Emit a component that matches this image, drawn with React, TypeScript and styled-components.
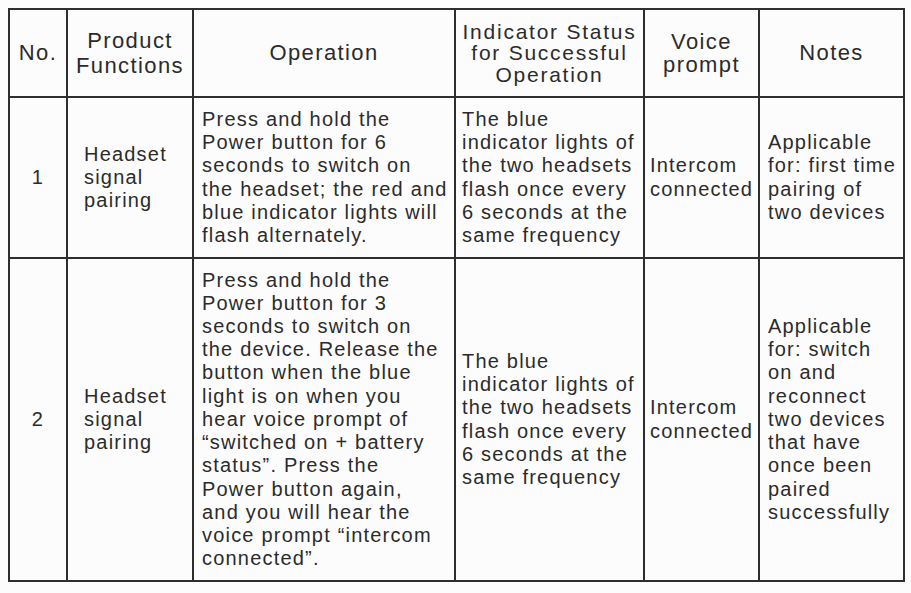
import React from "react";
import styled, { createGlobalStyle } from "styled-components";

const Global = createGlobalStyle`
  html, body { margin: 0; padding: 0; background: #fcfcfc; }
  body { font-family: "Liberation Sans", Arial, sans-serif; color: #2b2b2b; }
`;

const Page = styled.div`
  width: 911px;
  height: 593px;
  padding: 8px 0 0 8px;
  box-sizing: border-box;
`;

const Table = styled.table`
  border-collapse: collapse;
  table-layout: fixed;
  width: 895px;
  border: 2px solid #2e2e2e;
`;

const Row = styled.tr<{ $h: number }>`
  height: ${(p) => p.$h}px;
`;

const Cell = styled.td<{ $align?: string; $pl?: number; $lh?: number }>`
  border: 2px solid #2e2e2e;
  padding: 0 0 0 ${(p) => p.$pl ?? 8}px;
  vertical-align: middle;
  text-align: ${(p) => p.$align ?? "left"};
  font-size: 20px;
  line-height: ${(p) => p.$lh ?? 23.2}px;
  letter-spacing: 1.2px;
  white-space: nowrap;
  overflow: hidden;
`;

const Head = styled(Cell).attrs({ as: "th" })<{ $fs?: number; $ls?: number }>`
  font-weight: normal;
  text-align: center;
  padding: 0;
  font-size: ${(p) => p.$fs ?? 22}px;
  letter-spacing: ${(p) => p.$ls ?? 1.4}px;
`;

const Lines = ({ l }: { l: string[] }) => (
  <>
    {l.map((s, i) => (
      <React.Fragment key={i}>
        {i > 0 && <br />}
        {s}
      </React.Fragment>
    ))}
  </>
);

const rows = [
  {
    no: "1",
    h: 161,
    fn: ["Headset", "signal", "pairing"],
    op: [
      "Press and hold the",
      "Power button for 6",
      "seconds to switch on",
      "the headset; the red and",
      "blue indicator lights will",
      "flash alternately.",
    ],
    ind: [
      "The blue",
      "indicator lights of",
      "the two headsets",
      "flash once every",
      "6 seconds at the",
      "same frequency",
    ],
    voice: ["Intercom", "connected"],
    notes: ["Applicable", "for: first time", "pairing of", "two devices"],
  },
  {
    no: "2",
    h: 323,
    fn: ["Headset", "signal", "pairing"],
    op: [
      "Press and hold the",
      "Power button for 3",
      "seconds to switch on",
      "the device. Release the",
      "button when the blue",
      "light is on when you",
      "hear voice prompt of",
      "\u201cswitched on + battery",
      "status\u201d. Press the",
      "Power button again,",
      "and you will hear the",
      "voice prompt \u201cintercom",
      "connected\u201d.",
    ],
    ind: [
      "The blue",
      "indicator lights of",
      "the two headsets",
      "flash once every",
      "6 seconds at the",
      "same frequency",
    ],
    voice: ["Intercom", "connected"],
    notes: [
      "Applicable",
      "for: switch",
      "on and",
      "reconnect",
      "two devices",
      "that have",
      "once been",
      "paired",
      "successfully",
    ],
  },
];

export default function App() {
  return (
    <Page>
      <Global />
      <Table>
        <colgroup>
          <col style={{ width: 58 }} />
          <col style={{ width: 126 }} />
          <col style={{ width: 262 }} />
          <col style={{ width: 189 }} />
          <col style={{ width: 115 }} />
          <col style={{ width: 145 }} />
        </colgroup>
        <thead>
          <Row $h={88}>
            <Head>No.</Head>
            <Head $lh={25}>
              <Lines l={["Product", "Functions"]} />
            </Head>
            <Head>Operation</Head>
            <Head $lh={21.5} $fs={21} $ls={1.75}>
              <Lines l={["Indicator Status", "for Successful", "Operation"]} />
            </Head>
            <Head>
              <Lines l={["Voice", "prompt"]} />
            </Head>
            <Head>Notes</Head>
          </Row>
        </thead>
        <tbody>
          {rows.map((r) => (
            <Row key={r.no} $h={r.h}>
              <Cell $align="center" $pl={0}>
                {r.no}
              </Cell>
              <Cell $pl={16}>
                <Lines l={r.fn} />
              </Cell>
              <Cell $pl={8}>
                <Lines l={r.op} />
              </Cell>
              <Cell $pl={6}>
                <Lines l={r.ind} />
              </Cell>
              <Cell $pl={5}>
                <Lines l={r.voice} />
              </Cell>
              <Cell $pl={8}>
                <Lines l={r.notes} />
              </Cell>
            </Row>
          ))}
        </tbody>
      </Table>
    </Page>
  );
}
